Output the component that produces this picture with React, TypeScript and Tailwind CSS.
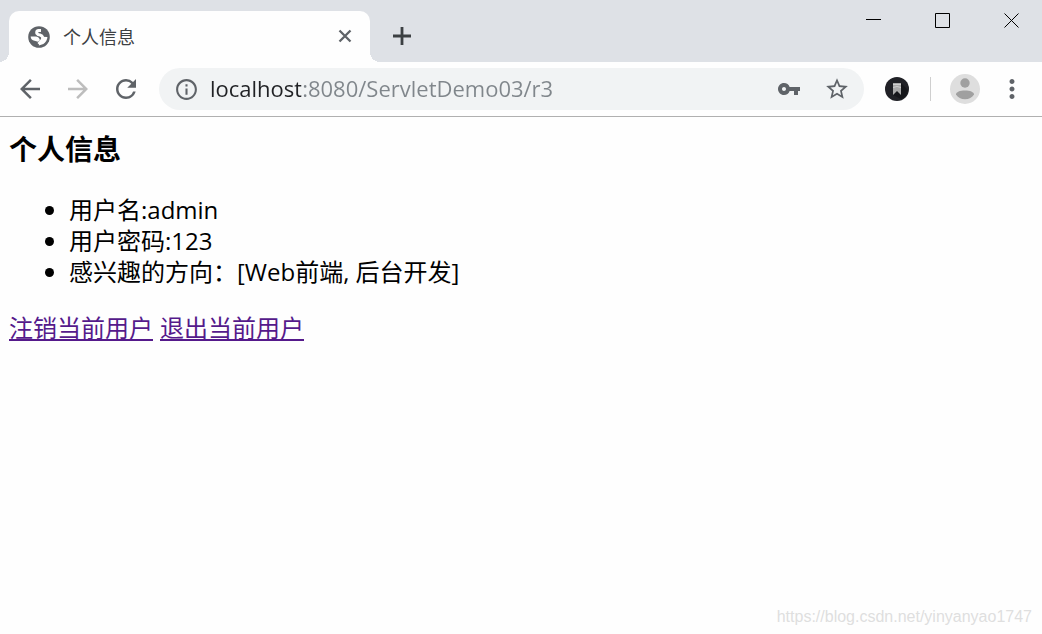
import React, { useState } from 'react';
import {
  MdArrowBack,
  MdArrowForward,
  MdInfoOutline,
  MdMoreVert,
  MdRefresh,
  MdStarBorder,
  MdVpnKey,
} from 'react-icons/md';

interface IconButtonProps {
  label: string;
  className?: string;
  children: React.ReactNode;
}

const IconButton: React.FC<IconButtonProps> = ({ label, className = '', children }) => (
  <button type="button" aria-label={label} className={`flex shrink-0 items-center justify-center ${className}`}>
    {children}
  </button>
);

const GlobeIcon = () => (
  <svg width="22" height="22" viewBox="0 0 22 22" aria-hidden="true">
    <circle cx="11" cy="11" r="10.8" fill="#5f6368" />
    <path
      d="M13 4.500h-2.500Q8.300 5 8.800 7.300Q10 8.900 12 9Q14.200 9.500 15 12Q15.200 14.500 12.500 16L10.500 18"
      fill="none"
      stroke="#fefefe"
      strokeWidth="3"
    />
    <path d="M2.600 10.400l5 .2q3.600.3 4.400 3.600l-2 1.500-3.500-.9Q3 14 2.600 10.400z" fill="#fefefe" />
    <path d="M14 10.800l5.400.3q-.3 4.500-4 6.900l-4.600 1.500 1-4.500z" fill="#fefefe" />
  </svg>
);

const BookmarkExtensionIcon = () => (
  <svg width="24" height="24" viewBox="0 0 24 24" aria-hidden="true">
    <circle cx="12" cy="12" r="12" fill="#202126" />
    <path d="M16 6l7 7c-.5 4-3.500 8-7 9l-8-4z" fill="#15161a" />
    <path d="M8 6h8v12l-4-4-4 4z" fill="#a9a9a9" />
    <path d="M8 7.500h8M8 10.500l4-1 4 1" stroke="#d0d0d0" fill="none" />
  </svg>
);

const AvatarIcon = () => (
  <svg width="30" height="30" viewBox="0 0 30 30" aria-hidden="true">
    <circle cx="15" cy="15" r="15" fill="#dedede" />
    <circle cx="15" cy="9" r="4.700" fill="#a0a0a0" />
    <path d="M6 20.500C6 18 10 16.500 15 16.500s9 1.500 9 4c-1.800 3-5 4.700-9 4.700s-7.200-1.700-9-4.700z" fill="#a0a0a0" />
  </svg>
);

const TabStrip = () => (
  <header className="flex items-start justify-between bg-[#dee1e6]">
    <div className="flex min-w-0 items-center pt-[11px] pl-[9px]">
      <div className="relative flex h-[51px] w-[361px] items-center rounded-t-[10px] bg-[#fefefe] pr-[13px] pl-[19px]">
        <span className="absolute bottom-0 -left-[10px] size-[10px] bg-[radial-gradient(circle_at_0_0,#dee1e6_10px,#fefefe_10px)]" />
        <span className="absolute -right-[10px] bottom-0 size-[10px] bg-[radial-gradient(circle_at_100%_0,#dee1e6_10px,#fefefe_10px)]" />
        <GlobeIcon />
        <span className="ml-[13px] flex-1 truncate text-[18px] leading-6 text-[#3c4043]">个人信息</span>
        <IconButton label="关闭标签页" className="size-6 pb-px text-[#5f6368]">
          <svg width="14" height="14" viewBox="0 0 14 14" stroke="currentColor" strokeWidth="2.300">
            <path d="M1.500 1.500l11 11M12.500 1.500l-11 11" />
          </svg>
        </IconButton>
      </div>
      <IconButton label="新标签页" className="ml-4 size-8 pb-px text-[#3c4043]">
        <svg width="18" height="18" viewBox="0 0 18 18" stroke="currentColor" strokeWidth="2.800">
          <path d="M9 0v18M0 9h18" />
        </svg>
      </IconButton>
    </div>
    <div className="flex gap-2 text-black">
      <IconButton label="最小化" className="h-[41px] w-[61px]">
        <svg width="15" height="15" viewBox="0 0 15 15" stroke="currentColor">
          <path d="M0 6.500h15" />
        </svg>
      </IconButton>
      <IconButton label="最大化" className="h-[41px] w-[61px]">
        <svg width="15" height="15" viewBox="0 0 15 15" stroke="currentColor" fill="none">
          <path d="M.5.5h14v14H.5z" />
        </svg>
      </IconButton>
      <IconButton label="关闭" className="h-[41px] w-[61px]">
        <svg width="15" height="15" viewBox="0 0 15 15" stroke="currentColor">
          <path d="M.5.5l14 14M14.500.5l-14 14" />
        </svg>
      </IconButton>
    </div>
  </header>
);

const Toolbar = () => {
  const [url, setUrl] = useState('localhost:8080/ServletDemo03/r3');

  return (
    <nav className="flex h-[55px] items-center border-b border-[#b0b0b0] px-[15px] text-[#5f6368]">
      <div className="flex gap-[18px]">
        <IconButton label="后退" className="size-[30px]">
          <MdArrowBack size={30} />
        </IconButton>
        <IconButton label="前进" className="size-[30px] text-[#bdbdbd]">
          <MdArrowForward size={30} />
        </IconButton>
        <IconButton label="重新加载" className="size-[30px]">
          <MdRefresh size={30} />
        </IconButton>
      </div>
      <div className="ml-[18px] flex h-[42px] min-w-0 flex-1 items-center rounded-full bg-[#f1f3f4] pr-[14px] pl-[15px]">
        <IconButton label="网站信息" className="size-[25px]">
          <MdInfoOutline size={25} />
        </IconButton>
        {/* host part is dark, the rest of the address is grey */}
        <input
          type="text"
          aria-label="地址"
          value={url}
          onChange={(e) => setUrl(e.target.value)}
          className="ml-[11px] h-8 min-w-0 flex-1 bg-[linear-gradient(to_right,#202124_91px,#80868b_91px)] bg-clip-text pb-0.5 text-[22px] text-transparent caret-black outline-none"
        />
        <IconButton label="密码" className="size-6">
          <MdVpnKey size={24} />
        </IconButton>
        <IconButton label="收藏" className="ml-[23px] size-[26px]">
          <MdStarBorder size={26} />
        </IconButton>
      </div>
      <IconButton label="书签扩展" className="ml-[21px]">
        <BookmarkExtensionIcon />
      </IconButton>
      <span className="ml-[21px] h-6 w-px bg-[#cfcfcf]" />
      <IconButton label="用户" className="ml-[19px]">
        <AvatarIcon />
      </IconButton>
      <IconButton label="更多" className="ml-[17px] size-[30px]">
        <MdMoreVert size={30} />
      </IconButton>
    </nav>
  );
};

const items = ['用户名:admin', '用户密码:123', '感兴趣的方向：[Web前端, 后台开发]'];
const links = ['注销当前用户', '退出当前用户'];

export default function App() {
  return (
    <div className="flex min-h-screen flex-col bg-[#fefefe] font-['Open_Sans','Noto_Sans_CJK_SC',sans-serif]">
      <TabStrip />
      <Toolbar />
      <main className="flex-1 px-[9px] pt-[14px] text-2xl leading-[31px] text-black">
        <h3 className="mb-[27px] text-[28px] leading-9 font-bold">个人信息</h3>
        <ul className="mb-[25px] list-disc pl-[60px]">
          {items.map((item) => (
            <li key={item}>{item}</li>
          ))}
        </ul>
        <div className="flex gap-[7px] text-[#551a8b]">
          {links.map((link) => (
            <a key={link} href="#" className="underline decoration-2 underline-offset-2">
              {link}
            </a>
          ))}
        </div>
      </main>
      <footer className="px-[10px] pb-[7px] text-right font-['Liberation_Sans',sans-serif] text-base leading-5 text-[#dfdfdf]">
        https://blog.csdn.net/yinyanyao1747
      </footer>
    </div>
  );
}
